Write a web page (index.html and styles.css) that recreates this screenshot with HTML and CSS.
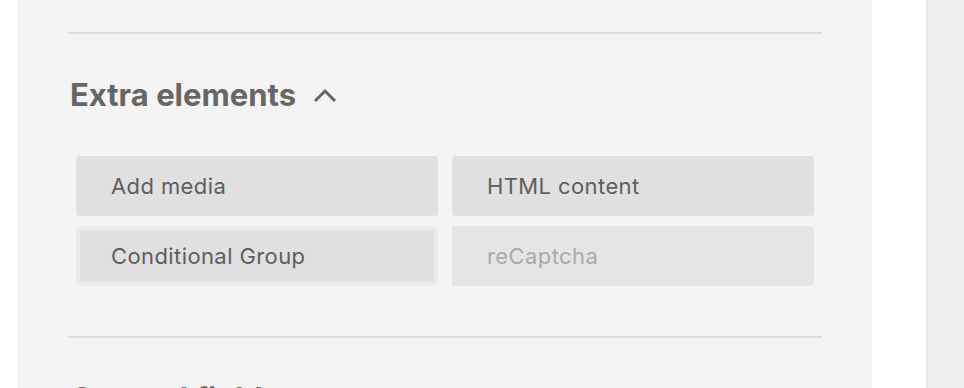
FILE: index.html
```html
<!DOCTYPE html>
<html lang="en">
  <head>
    <meta charset="UTF-8" />
    <meta name="viewport" content="width=device-width, initial-scale=1.0" />
    <title>Form builder</title>
    <link rel="stylesheet" href="styles.css">
  </head>
  <body>
    <div class="builder">
      <div class="panel">
        <div class="section">
          <h2 class="section-title">
            Extra elements
            <svg class="chevron" viewBox="0 0 24 16">
              <polyline points="2,14 12,4 22,14" fill="none" stroke="#666" stroke-width="3"></polyline>
            </svg>
          </h2>
          <div class="element-grid">
            <div class="element">Add media</div>
            <div class="element">HTML content</div>
            <div class="element element-active">Conditional Group</div>
            <div class="element element-disabled">reCaptcha</div>
          </div>
        </div>
        <div class="section">
          <h2 class="section-title">General fields</h2>
        </div>
      </div>
      <div class="spacer"></div>
      <div class="sidebar"></div>
    </div>
  </body>
</html>
```

FILE: styles.css
```css
body {
  font-family: "Inter", "Noto Sans", sans-serif;
  background-color: #fff;
  color: #666;
  margin: 0;
  height: 100vh;
  overflow: hidden;
}

.builder {
  display: flex;
  height: 100%;
}

.panel {
  width: 754px;
  margin-left: 18px;
  padding: 32px 50px 0;
  background: #f4f4f4;
}

.spacer {
  width: 54px;
}

.sidebar {
  flex: 1;
  background: #efefef;
  border-left: 2px solid #e6e6e6;
}

.section {
  border-top: 2px solid #dcdcdc;
  padding-bottom: 50px;
}

.section-title {
  display: flex;
  align-items: center;
  gap: 17px;
  margin: 43px 0 0 2px;
  font-size: 31px;
  line-height: 36px;
  font-weight: 700;
  color: #666;
}

.chevron {
  width: 24px;
  height: 16px;
}

.element-grid {
  display: grid;
  grid-template-columns: 1fr 1fr;
  column-gap: 14px;
  row-gap: 10px;
  margin: 43px 8px 0;
}

.element {
  height: 60px;
  box-sizing: border-box;
  display: flex;
  align-items: center;
  padding-left: 35px;
  background: #e0e0e0;
  border-radius: 4px;
  font-size: 22px;
  letter-spacing: 0.4px;
  color: #5e5e5e;
}

.element-active {
  border: 4px solid #ebebeb;
  padding-left: 31px;
  background-clip: padding-box;
}

.element-disabled {
  background: #e5e5e5;
  color: #aaa;
}
```
